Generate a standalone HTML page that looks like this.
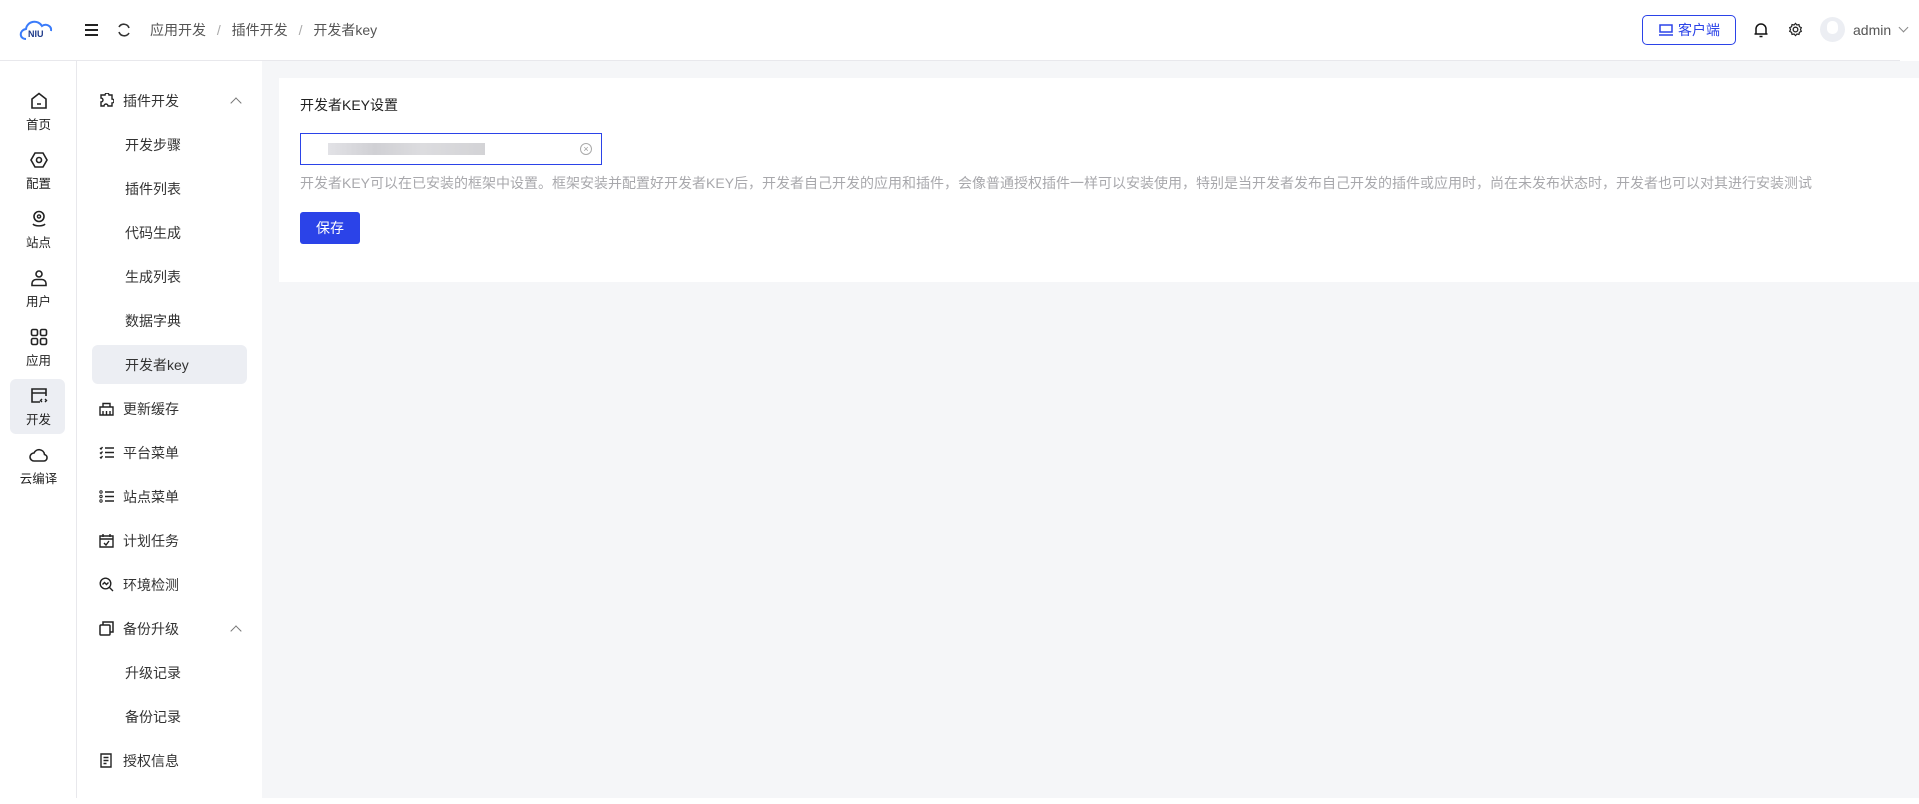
<!DOCTYPE html>
<html><head><meta charset="utf-8"><style>
*{margin:0;padding:0;box-sizing:border-box}
body{width:1919px;height:804px;background:#fff;font-family:"Liberation Sans","Noto Sans CJK SC",sans-serif;color:#333;position:relative;overflow:hidden;font-size:14px}
.hdr{position:absolute;left:0;top:0;width:1900px;height:61px;border-bottom:1px solid #e8e8ec;background:#fff}
.rail{position:absolute;left:0;top:61px;width:77px;height:737px;border-right:1px solid #e8e8ec;background:#fff}
.sub{position:absolute;left:77px;top:61px;width:185px;height:737px;background:#fff}
.main{position:absolute;left:262px;top:61px;width:1657px;height:737px;background:#f5f6f8}
.card{position:absolute;left:279px;top:78px;width:1640px;height:204px;background:#fff}
.ri{position:absolute;left:0;width:77px;text-align:center;font-size:12.5px;color:#222}
.ri svg{display:block;margin:0 auto 4px}
.si{position:absolute;left:99px;font-size:14px;color:#333;line-height:20px}
.si svg{position:absolute;left:0;top:2px}
.si span{position:absolute;left:24px;white-space:nowrap}
.sc{position:absolute;left:125px;font-size:14px;color:#333;line-height:20px;white-space:nowrap}
.chev{position:absolute;left:232px;width:8px;height:8px;border-left:1.2px solid #777;border-top:1.2px solid #777;transform:rotate(45deg)}
</style></head><body>
<div class="hdr">
 <svg style="position:absolute;left:18px;top:18px" width="38" height="24" viewBox="0 0 38 24"><path d="M8 21 C1 21 1 12 8 11 C9 3 20 1 24 8 C28 5 34 8 33 13" fill="none" stroke="#3a7bfa" stroke-width="2"/><text x="10" y="19" font-size="9" font-weight="bold" fill="#1e3a8a" font-family="Liberation Sans">NIU</text></svg>
 <svg style="position:absolute;left:85px;top:24px" width="14" height="12"><path d="M0 1h13M0 6h13M0 11h13" stroke="#222" stroke-width="2"/></svg>
 <svg style="position:absolute;left:117px;top:23px" width="14" height="14" viewBox="0 0 14 14"><path d="M12 5A5.5 5.5 0 0 0 2 4M2 9A5.5 5.5 0 0 0 12 10" fill="none" stroke="#333" stroke-width="1.6"/></svg>
 <div style="position:absolute;left:150px;top:20px;font-size:14px;color:#555;line-height:20px;white-space:nowrap">应用开发 <span style="color:#aaa;margin:0 7px">/</span> 插件开发 <span style="color:#aaa;margin:0 7px">/</span> 开发者key</div>
 <div style="position:absolute;left:1642px;top:15px;width:94px;height:30px;border:1px solid #2b43e8;border-radius:5px;color:#2b43e8;font-size:14px;line-height:28px;padding-left:35px">客户端
  <svg style="position:absolute;left:16px;top:8px" width="14" height="12"><rect x="1" y="1" width="12" height="7" fill="none" stroke="#2b43e8" stroke-width="1.5"/><path d="M0 11h14" stroke="#2b43e8" stroke-width="1.5"/></svg></div>
 <svg style="position:absolute;left:1754px;top:22px" width="14" height="16" viewBox="0 0 14 16"><path d="M2 12V7a5 5 0 0 1 10 0v5h1.5H0.5zM5.5 14.5h3" fill="none" stroke="#111" stroke-width="1.5"/></svg>
 <svg style="position:absolute;left:1788px;top:22px" width="15" height="15" viewBox="0 0 16 16"><circle cx="8" cy="8" r="2.5" fill="none" stroke="#222" stroke-width="1.4"/><path d="M8 1.5l1.5 1.7 2.2-.4.5 2.2 2 1-.9 2 .9 2-2 1-.5 2.2-2.2-.4L8 14.5l-1.5-1.7-2.2.4-.5-2.2-2-1 .9-2-.9-2 2-1 .5-2.2 2.2.4z" fill="none" stroke="#222" stroke-width="1.3"/></svg>
 <div style="position:absolute;left:1820px;top:17px;width:25px;height:25px;border-radius:50%;background:#eceef3"><div style="position:absolute;left:7px;top:4px;width:11px;height:13px;border-radius:5px;background:#fff"></div></div>
 <div style="position:absolute;left:1853px;top:20px;font-size:14px;color:#555;line-height:20px">admin</div>
 <div style="position:absolute;left:1900px;top:24px;width:7px;height:7px;border-right:1.2px solid #888;border-bottom:1.2px solid #888;transform:rotate(45deg)"></div>
</div>
<div class="rail">
 <div style="position:absolute;left:10px;top:318px;width:55px;height:55px;background:#eceef3;border-radius:6px"></div>
 <div class="ri" style="top:31px"><svg width="18" height="18" viewBox="0 0 18 18"><path d="M2 7L9 1.5 16 7v9H2z M7 12h4" fill="none" stroke="#222" stroke-width="1.6"/></svg>首页</div>
 <div class="ri" style="top:90px"><svg width="18" height="18" viewBox="0 0 18 18"><path d="M5 2h8l4 7-4 7H5L1 9z" fill="none" stroke="#222" stroke-width="1.6"/><circle cx="9" cy="9" r="2.5" fill="none" stroke="#222" stroke-width="1.6"/></svg>配置</div>
 <div class="ri" style="top:149px"><svg width="18" height="18" viewBox="0 0 18 18"><circle cx="9" cy="6.5" r="5" fill="none" stroke="#222" stroke-width="1.6"/><circle cx="9" cy="6.5" r="1.6" fill="none" stroke="#222" stroke-width="1.4"/><path d="M3 14c2 2.5 10 2.5 12 0" fill="none" stroke="#222" stroke-width="1.6"/></svg>站点</div>
 <div class="ri" style="top:208px"><svg width="18" height="18" viewBox="0 0 18 18"><circle cx="9" cy="5" r="3" fill="none" stroke="#222" stroke-width="1.6"/><path d="M2 16.5v-2a4 4 0 0 1 4-4h6a4 4 0 0 1 4 4v2z" fill="none" stroke="#222" stroke-width="1.6"/></svg>用户</div>
 <div class="ri" style="top:267px"><svg width="18" height="18" viewBox="0 0 18 18"><rect x="1.5" y="1.5" width="6" height="6" rx="1.5" fill="none" stroke="#222" stroke-width="1.6"/><rect x="10.5" y="1.5" width="6" height="6" rx="1.5" fill="none" stroke="#222" stroke-width="1.6"/><rect x="1.5" y="10.5" width="6" height="6" rx="1.5" fill="none" stroke="#222" stroke-width="1.6"/><rect x="10.5" y="10.5" width="6" height="6" rx="1.5" fill="none" stroke="#222" stroke-width="1.6"/></svg>应用</div>
 <div class="ri" style="top:326px"><svg width="18" height="18" viewBox="0 0 18 18"><path d="M10 15H2V2h14v7M2 6h14" fill="none" stroke="#222" stroke-width="1.6"/><path d="M12 12l-1.5 1.5L12 15M15 12l1.5 1.5L15 15" fill="none" stroke="#222" stroke-width="1.4"/></svg>开发</div>
 <div class="ri" style="top:385px"><svg width="20" height="18" viewBox="0 0 20 18"><path d="M5 15a4 4 0 0 1 0-8 5.5 5.5 0 0 1 10.5 1.5A3.3 3.3 0 0 1 15 15z" fill="none" stroke="#222" stroke-width="1.6"/></svg>云编译</div>
</div>
<div class="sub">
 <div style="position:absolute;left:15px;top:284px;width:155px;height:39px;background:#eceef3;border-radius:6px"></div>
</div>
<div class="si" style="top:91px"><svg width="15" height="15" viewBox="0 0 15 15"><path d="M2 2h4a2 2 0 0 1 4 0h3v4a2 2 0 0 1 0 4v3H9a2 2 0 0 0-4 0H2V9a2 2 0 0 0 0-4z" fill="none" stroke="#222" stroke-width="1.4"/></svg><span>插件开发</span></div>
<div class="chev" style="top:99px"></div>
<div class="sc" style="top:135px">开发步骤</div>
<div class="sc" style="top:179px">插件列表</div>
<div class="sc" style="top:223px">代码生成</div>
<div class="sc" style="top:267px">生成列表</div>
<div class="sc" style="top:311px">数据字典</div>
<div class="sc" style="top:355px">开发者key</div>
<div class="si" style="top:399px"><svg width="15" height="15" viewBox="0 0 15 15"><path d="M1 6h13v8H1zM4 6V2.5h7V6M4 10v4M7.5 10v4M11 10v4" fill="none" stroke="#222" stroke-width="1.4"/></svg><span>更新缓存</span></div>
<div class="si" style="top:443px"><svg width="15" height="15" viewBox="0 0 15 15"><path d="M6 3h9M6 7.5h9M6 12h9M1 3l1 1 1.5-2M1 7.5l1 1 1.5-2M1 12l1 1 1.5-2" fill="none" stroke="#222" stroke-width="1.4"/></svg><span>平台菜单</span></div>
<div class="si" style="top:487px"><svg width="15" height="15" viewBox="0 0 15 15"><path d="M6 3h9M6 7.5h9M6 12h9" stroke="#222" stroke-width="1.4"/><circle cx="2" cy="3" r="1.2" fill="none" stroke="#222"/><circle cx="2" cy="7.5" r="1.2" fill="none" stroke="#222"/><circle cx="2" cy="12" r="1.2" fill="none" stroke="#222"/></svg><span>站点菜单</span></div>
<div class="si" style="top:531px"><svg width="15" height="15" viewBox="0 0 15 15"><path d="M1 3h13v11H1zM1 6h13M4 1v3M11 1v3M5 10l2 2 3-4" fill="none" stroke="#222" stroke-width="1.4"/></svg><span>计划任务</span></div>
<div class="si" style="top:575px"><svg width="15" height="15" viewBox="0 0 15 15"><circle cx="6.5" cy="6.5" r="5.3" fill="none" stroke="#222" stroke-width="1.4"/><path d="M10.5 10.5L14 14M3.5 7.5l2-2 2 2 2-2" fill="none" stroke="#222" stroke-width="1.4"/></svg><span>环境检测</span></div>
<div class="si" style="top:619px"><svg width="15" height="15" viewBox="0 0 15 15"><rect x="1" y="4" width="10" height="10" rx="1" fill="none" stroke="#222" stroke-width="1.5"/><path d="M4 4V1h10v10h-3" fill="none" stroke="#222" stroke-width="1.5"/></svg><span>备份升级</span></div>
<div class="chev" style="top:627px"></div>
<div class="sc" style="top:663px">升级记录</div>
<div class="sc" style="top:707px">备份记录</div>
<div class="si" style="top:751px"><svg width="15" height="15" viewBox="0 0 15 15"><path d="M2 1h10v13H2zM4.5 4.5h5M4.5 7.5h5M4.5 10.5h3" fill="none" stroke="#222" stroke-width="1.4"/></svg><span>授权信息</span></div>
<div class="main"></div>
<div class="card">
 <div style="position:absolute;left:21px;top:17px;font-size:14px;color:#222;line-height:20px">开发者KEY设置</div>
 <div style="position:absolute;left:21px;top:55px;width:302px;height:32px;border:1px solid #2b43e8">
  <div style="position:absolute;left:27px;top:9px;width:157px;height:12px;background:linear-gradient(90deg,#e2e2e6,#d0d0d4 30%,#dcdcdf 60%,#d3d3d6)"></div>
  <div style="position:absolute;left:279px;top:9px;width:12px;height:12px;border:1px solid #aaa;border-radius:50%;font-size:9px;color:#999;text-align:center;line-height:10px">×</div>
 </div>
 <div style="position:absolute;left:21px;top:95px;font-size:14px;color:#a8a8ac;line-height:20px;white-space:nowrap">开发者KEY可以在已安装的框架中设置。框架安装并配置好开发者KEY后，开发者自己开发的应用和插件，会像普通授权插件一样可以安装使用，特别是当开发者发布自己开发的插件或应用时，尚在未发布状态时，开发者也可以对其进行安装测试</div>
 <div style="position:absolute;left:21px;top:134px;width:60px;height:32px;background:#2b43e8;border-radius:3px;color:#fff;font-size:14px;line-height:32px;text-align:center">保存</div>
</div>
</body></html>
